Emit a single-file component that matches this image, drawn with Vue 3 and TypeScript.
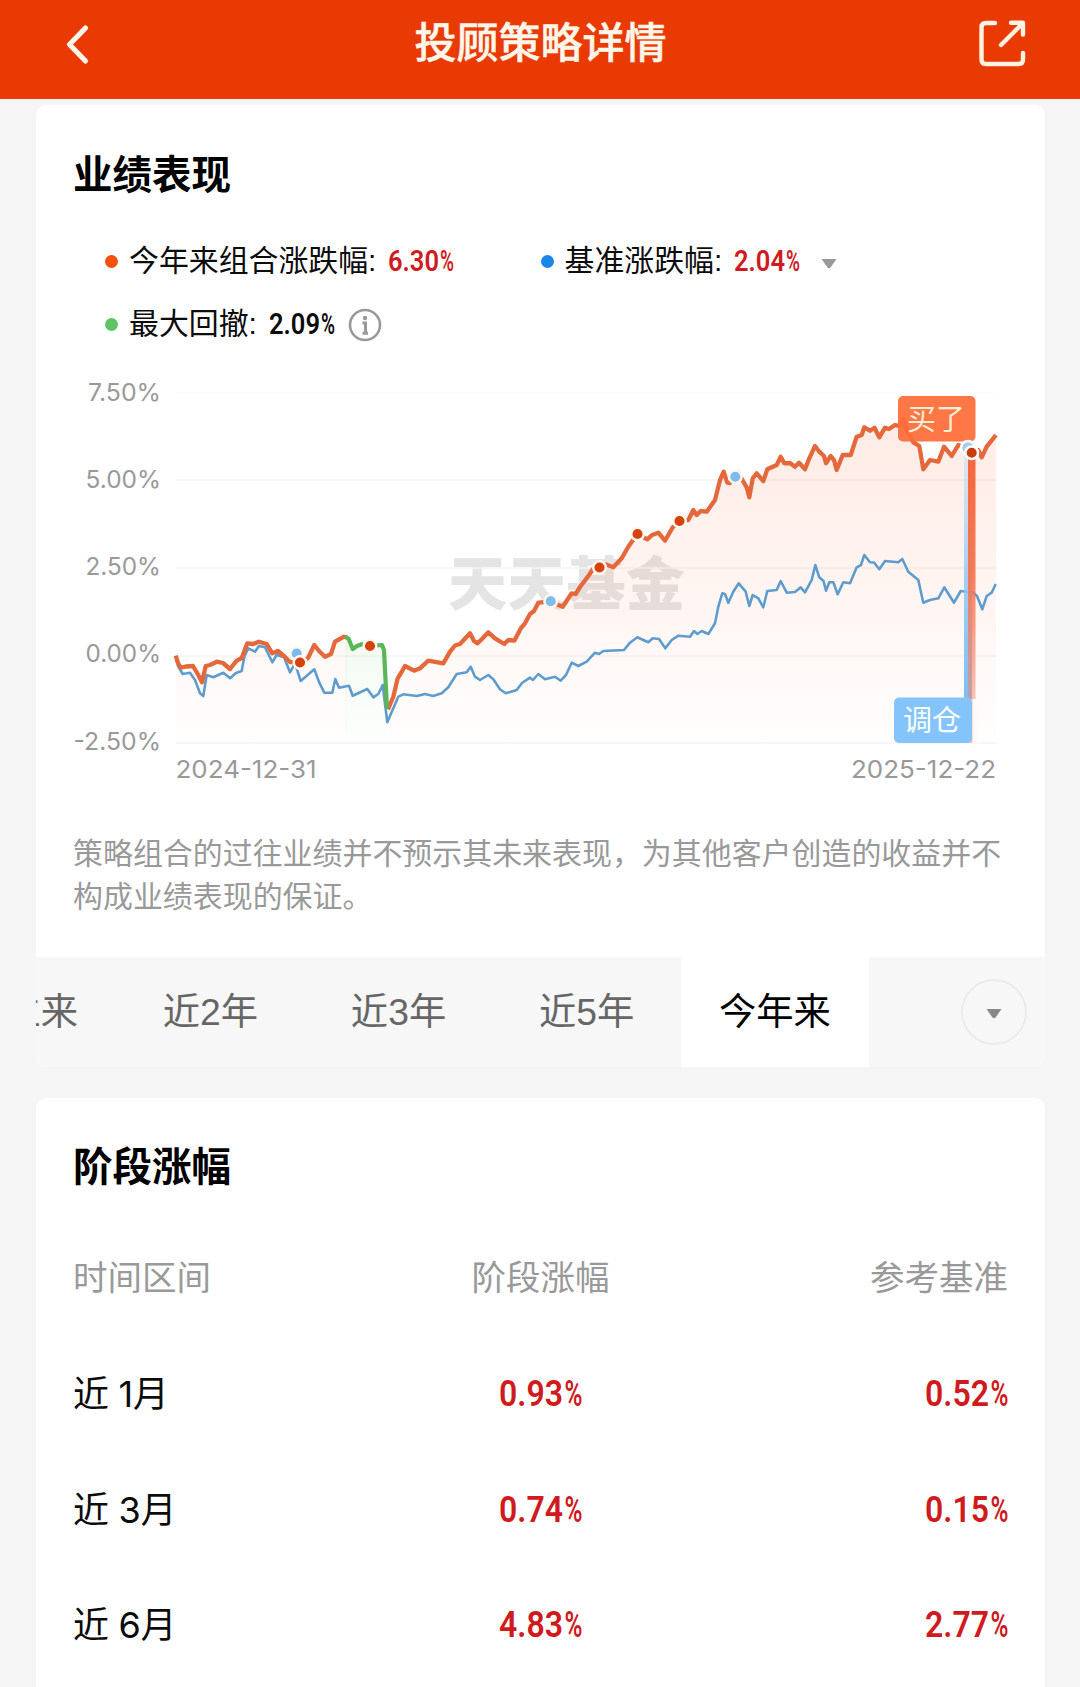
<script setup lang="ts">
type Point = [number, number]

interface StageRow {
  span: string
  gain: string
  base: string
}

const tabs: string[] = ['成立来', '近2年', '近3年', '近5年', '今年来']
const activeTab = '今年来'

const rows: StageRow[] = [
  { span: '近 1月', gain: '0.93', base: '0.52' },
  { span: '近 3月', gain: '0.74', base: '0.15' },
  { span: '近 6月', gain: '4.83', base: '2.77' },
]

const axis = [
  { label: '7.50%', x: 88, y: 400.5, line: 393, tone: '#fbfbfb' },
  { label: '5.00%', x: 85.5, y: 487.5, line: 480, tone: '#f3f2f2' },
  { label: '2.50%', x: 85.5, y: 575, line: 568, tone: '#f6f5f5' },
  { label: '0.00%', x: 85.5, y: 662, line: 656, tone: '#f6f5f5' },
  { label: '-2.50%', x: 73.5, y: 750, line: 743, tone: '#f5f4f4' },
]

const before: Point[] = [
  [175.7, 655.7], [178, 663], [180.7, 667.7], [186, 666.5], [193, 666], [198.3, 675], [202, 682.3], [205.7, 666], [210, 665], [216.7, 661.7],
  [223, 663], [230, 669], [236.7, 660.7], [241.7, 658], [247.3, 643.3], [253, 644], [259, 641.7], [266.7, 644],
  [272.3, 653.3], [278, 651], [284, 656], [290, 662], [300, 662.3], [308, 658], [314.3, 645], [319, 651], [325, 656.7], [331, 654],
  [335, 641.7], [344, 636.7], [347.3, 637.7],
]
const drawdown: Point[] = [
  [345, 636.7], [348.5, 638.5], [352.7, 649], [357, 646], [361.7, 644.3], [370, 646], [382, 645], [384, 650], [387, 708.3],
]
const after: Point[] = [
  [388, 709.5], [393.3, 696.7], [397.7, 678.3], [401, 673], [405, 666], [414, 670.7], [420, 668.3], [428.3, 660.7], [443.3, 663.3],
  [450, 651.7], [455, 645.5], [460, 644], [470, 633.3], [474, 641], [477.3, 643.3], [482, 639], [488.3, 632.3], [495, 638.3], [504.3, 644], [508.3, 640],
  [514.3, 640.7], [521, 628], [525, 623.3], [530, 614], [534, 611], [538.3, 602.7], [550.7, 601.7], [562.7, 606.7], [571.7, 593.3], [575.7, 594],
  [580, 587], [588.3, 576], [593, 569], [599.3, 567.3], [606, 564.5], [613.3, 567.3], [621.7, 558.3], [628.3, 546.7], [637.3, 534],
  [647.3, 539.3], [652, 535], [658.3, 532.7], [665, 540.7], [672.7, 527.3], [679.3, 521.3], [688.3, 520], [693.3, 510],
  [696.7, 515], [700.7, 511], [706.7, 511.7], [715, 500], [720, 480], [723.7, 471.7], [727.3, 482.7], [730, 483],
  [738, 472], [744, 482.7], [746.7, 487.3], [749.3, 497.3], [752.7, 478.3], [756.7, 473.3], [763.3, 481],
  [767.3, 469.3], [776.7, 465], [780.7, 456.7], [784.3, 463.3], [790, 463], [795, 466.7], [799, 462.7], [805, 469.3],
  [809.3, 458.3], [815, 446], [819.3, 451.7], [824, 456], [826, 463.3], [830.7, 456], [834, 460], [836.7, 470],
  [842.7, 455], [850.7, 455], [856.7, 436.7], [861.7, 435], [864.3, 427.3], [870, 430.7], [874.5, 427.7],
  [879.3, 437.3], [885, 427.7], [889, 429], [895, 425], [899, 426], [903.3, 419.3], [906.7, 430], [913.3, 442.3], [919.3, 446],
  [923.3, 469.3], [930, 460], [938.3, 461.7], [944, 446.7], [951.7, 456], [958.3, 445], [968, 448], [978.3, 450],
  [981.7, 457.3], [986.7, 446.7], [990.7, 441.7], [996, 435],
]
const benchmark: Point[] = [
  [175.7, 656.7], [178, 666], [182.7, 674], [190, 672.7], [195, 680], [200, 693.3], [203.3, 696], [206.7, 675], [213.3, 677.3], [223.3, 672.7],
  [230, 678.3], [236, 673], [241.7, 671], [244.3, 656.7], [248.3, 648.3], [255, 651.7], [259, 646], [265, 647.3], [272.3, 662.3],
  [276.7, 655], [284, 657.3], [290, 672.3], [295, 663.3], [300.7, 681], [314.3, 669.3], [319.3, 682.7], [324.3, 692.7],
  [332.3, 692.7], [335.3, 679], [339, 687.7], [349, 685.7], [352.7, 695.7], [367.3, 689], [373.3, 697.3], [378.3, 694],
  [382.7, 685], [387.3, 722.3], [393.3, 708.3], [398.3, 696.7], [403.3, 694.3], [416.7, 696], [425, 694], [433.3, 696],
  [441.7, 693.3], [448.3, 687.3], [456.7, 674], [466.7, 672.3], [470.7, 666.7], [475, 676.7], [480, 680], [488.3, 675],
  [493.3, 679.3], [500, 689.3], [505.7, 693.3], [516.7, 690], [522, 683], [530, 677.7], [533, 680], [538.3, 674], [545, 679.3], [555, 676.7],
  [560.7, 680.7], [566, 675], [571.7, 662.7], [578.3, 666], [586.7, 661.7], [595, 652.7], [599, 654], [603.3, 651], [624, 650],
  [630, 642.7], [637.3, 637.3], [648.3, 642.3], [652.7, 638.3], [659, 639], [665.3, 648.3], [671.7, 640], [678.3, 635.7],
  [690, 636.7], [694, 631], [697.3, 634], [701.7, 631], [708.3, 634], [715, 623.3], [718.3, 606.7], [722.3, 593.3],
  [725, 594], [728.3, 602.7], [733.3, 591.7], [738.7, 583.3], [745.7, 591.7], [749.3, 606], [752.7, 595], [758.3, 598.3],
  [763.3, 607.3], [767.3, 591], [776.7, 590], [780.7, 581], [786.7, 592.7], [795, 592], [800.7, 587.3], [805, 592.3],
  [811.7, 580], [815.3, 565], [819.3, 577.3], [823.5, 581], [826, 590.7], [829.3, 582.3], [833.3, 582.3], [837.7, 594.3],
  [843.3, 582.3], [850, 583.3], [856.7, 567.3], [861, 565], [864.3, 555], [870, 562.3], [874, 562.5], [879.3, 569.3], [885, 561],
  [898.3, 562.3], [902.3, 559], [908.3, 571.7], [918.3, 580], [923.3, 602.7], [930, 600], [938.3, 598.3], [944.3, 587.3],
  [954, 602.7], [960.7, 591], [973.3, 592.7], [977, 596], [982.3, 609.3], [986.7, 596], [991.7, 592.7], [995.7, 584],
]

const trades: Point[] = [[300, 662.5], [370, 646], [599.5, 567.5], [637.5, 534], [679.5, 521]]
const adjusts: Point[] = [[296.7, 653.5], [550.7, 601.3], [735.3, 476.7]]

const path = (pts: Point[]): string => 'M' + pts.map((p) => p.join(' ')).join('L')
const area = (pts: Point[]): string =>
  `${path(pts)}L${pts[pts.length - 1][0]} 743L${pts[0][0]} 743Z`
</script>

<template>
  <div class="page">
    <header class="bar">
      <svg class="back" width="30" height="46" viewBox="0 0 30 46">
        <path d="M23.500 7L7.500 23.500L23.500 40" fill="none" stroke="#fff6ea" stroke-width="5.200" stroke-linecap="round" stroke-linejoin="round" />
      </svg>
      <h1>投顾策略详情</h1>
      <svg class="share" width="50" height="50" viewBox="978 19 50 50">
        <g fill="none" stroke="#fff3e2" stroke-width="4.400" stroke-linecap="round" stroke-linejoin="round">
          <path d="M995 23H986Q981.500 23 981.500 27.500V59.500Q981.500 64 986 64H1018.500Q1023 64 1023 59.500V53" />
          <path d="M1001 45L1022.500 23.500M1011 22.800H1023V34.500" />
        </g>
      </svg>
    </header>

    <section class="card perf">
      <h2>业绩表现</h2>
      <div class="legend">
        <div class="item">
          <i class="dot orange"></i><span class="name">今年来组合涨跌幅:</span>
          <svg class="value red" width="66" height="30"><text x="0" y="24"><tspan textLength="51" lengthAdjust="spacingAndGlyphs">6.30</tspan><tspan x="52" textLength="14" lengthAdjust="spacingAndGlyphs">%</tspan></text></svg>
        </div>
        <div class="item">
          <i class="dot blue"></i><span class="name">基准涨跌幅:</span>
          <svg class="value red" width="66" height="30"><text x="0" y="24"><tspan textLength="51" lengthAdjust="spacingAndGlyphs">2.04</tspan><tspan x="52" textLength="14" lengthAdjust="spacingAndGlyphs">%</tspan></text></svg>
          <svg class="caret" width="16" height="10"><path d="M0.500 0H15.500L9.500 8.500Q8 10 6.500 8.500Z" fill="#999" /></svg>
        </div>
        <div class="item">
          <i class="dot green"></i><span class="name">最大回撤:</span>
          <svg class="value" width="66" height="30"><text x="0" y="24"><tspan textLength="51" lengthAdjust="spacingAndGlyphs">2.09</tspan><tspan x="52" textLength="14" lengthAdjust="spacingAndGlyphs">%</tspan></text></svg>
          <svg class="info" width="34" height="34" viewBox="0 0 34 34">
            <circle cx="17" cy="17" r="15" fill="none" stroke="#999" stroke-width="2.600" />
            <circle cx="17" cy="10" r="2.200" fill="#999" />
            <path d="M14.500 15H17.500V25M14.500 25.200H20" fill="none" stroke="#999" stroke-width="3" />
          </svg>
        </div>
      </div>

      <svg class="chart" width="1009" height="430" viewBox="36 370 1009 430">
        <defs>
          <linearGradient id="warm" x1="0" y1="420" x2="0" y2="743" gradientUnits="userSpaceOnUse">
            <stop offset="0" stop-color="#ff6432" stop-opacity="0.130" />
            <stop offset="0.500" stop-color="#ff6e3c" stop-opacity="0.075" />
            <stop offset="1" stop-color="#ff7846" stop-opacity="0.010" />
          </linearGradient>
          <linearGradient id="mint" x1="0" y1="636" x2="0" y2="743" gradientUnits="userSpaceOnUse">
            <stop offset="0" stop-color="#64c864" stop-opacity="0.090" />
            <stop offset="1" stop-color="#64c864" stop-opacity="0.010" />
          </linearGradient>
          <linearGradient id="buy" x1="0" y1="452" x2="0" y2="700" gradientUnits="userSpaceOnUse">
            <stop offset="0" stop-color="#f7653a" />
            <stop offset="0.500" stop-color="#f7704a" stop-opacity="0.900" />
            <stop offset="1" stop-color="#f58468" stop-opacity="0.480" />
          </linearGradient>
          <linearGradient id="move" x1="0" y1="452" x2="0" y2="700" gradientUnits="userSpaceOnUse">
            <stop offset="0" stop-color="#b9ddf6" stop-opacity="0.450" />
            <stop offset="0.500" stop-color="#93c8f2" stop-opacity="0.850" />
            <stop offset="1" stop-color="#7fbdf3" />
          </linearGradient>
        </defs>
        <text class="mark" x="448" y="604.500" textLength="237" lengthAdjust="spacingAndGlyphs">天天基金</text>
        <g v-for="a in axis" :key="a.label">
          <path :d="`M176 ${a.line}H996`" :stroke="a.tone" stroke-width="1.500" />
          <text class="tick" :x="a.x" :y="a.y" :textLength="161 - a.x" lengthAdjust="spacingAndGlyphs">{{ a.label }}</text>
        </g>
        <path :d="area(before)" fill="url(#warm)" />
        <path :d="area(drawdown)" fill="url(#mint)" />
        <path :d="area(after)" fill="url(#warm)" />
        <g fill="none" stroke-linejoin="round">
          <path :d="path(benchmark)" stroke="#5f9ccd" stroke-width="2.600" />
          <path :d="path(before)" stroke="#e4683c" stroke-width="4.300" />
          <path :d="path(after)" stroke="#e4683c" stroke-width="4.300" />
          <path :d="path(drawdown)" stroke="#5bb559" stroke-width="4.200" />
        </g>
        <g stroke="#fff8f0" stroke-width="2.500">
          <circle v-for="p in adjusts" :key="p[0]" :cx="p[0]" :cy="p[1]" r="6.300" fill="#7dbcec" />
          <circle v-for="p in trades" :key="p[0]" :cx="p[0]" :cy="p[1]" r="6.300" fill="#d6410c" />
        </g>
        <rect x="964" y="452" width="8" height="247" fill="url(#move)" />
        <rect x="968" y="452" width="7.500" height="291" fill="url(#buy)" />
        <rect x="898" y="396" width="77.500" height="45.500" rx="5" fill="#ff6c39" fill-opacity="0.930" />
        <text class="tag" x="907" y="429.500" fill="#ffedd2">买了</text>
        <rect x="894" y="697.500" width="78" height="45.500" rx="5" fill="#84c4fb" />
        <path d="M972.500 699V745H977V699Z" fill="#fffaf8" />
        <text class="tag" x="903" y="731" fill="#f7ffff">调仓</text>
        <circle cx="968" cy="448" r="7" fill="#a6cdea" stroke="#fff" stroke-width="2.500" />
        <circle cx="971.700" cy="452.700" r="6.300" fill="#c93a0c" stroke="#fff" stroke-width="2.500" />
        <text class="tick" x="175.500" y="777.500" textLength="141" lengthAdjust="spacingAndGlyphs">2024-12-31</text>
        <text class="tick" x="851" y="777.500" textLength="145" lengthAdjust="spacingAndGlyphs">2025-12-22</text>
      </svg>

      <p class="note">策略组合的过往业绩并不预示其未来表现，为其他客户创造的收益并不构成业绩表现的保证。</p>

      <nav class="tabs">
        <div class="strip">
          <span v-for="t in tabs" :key="t" class="tab" :class="{ active: t === activeTab }">{{ t }}</span>
        </div>
        <span class="more">
          <svg width="16" height="10"><path d="M0.500 0H15.500L9.500 8.500Q8 10 6.500 8.500Z" fill="#888" /></svg>
        </span>
      </nav>
    </section>

    <section class="card stage">
      <h2>阶段涨幅</h2>
      <div class="row head"><span>时间区间</span><span>阶段涨幅</span><span>参考基准</span></div>
      <div v-for="r in rows" :key="r.span" class="row">
        <span class="span">{{ r.span }}</span>
        <svg v-for="(v, i) in [r.gain, r.base]" :key="i" class="value big red" width="83" height="36">
          <text x="0" y="30.500"><tspan textLength="64" lengthAdjust="spacingAndGlyphs">{{ v }}</tspan><tspan x="65.500" textLength="18" lengthAdjust="spacingAndGlyphs">%</tspan></text>
        </svg>
      </div>
    </section>
  </div>
</template>

<style>
body {
  background: #f5f5f5;
}
</style>

<style scoped>
.page {
  width: 1080px;
  height: 1687px;
  overflow: hidden;
  background: #f5f5f5;
  font-family: "Liberation Sans", "Noto Sans CJK SC", sans-serif;
  color: #0c0c0c;
}
.bar {
  box-sizing: border-box;
  height: 99px;
  padding: 0 52px 12px 62px;
  display: grid;
  grid-template-columns: 50px 1fr 50px;
  align-items: center;
  background: #e83a02;
}
.bar h1 {
  margin: 0 0 7px;
  padding-right: 9px;
  text-align: center;
  font-size: 42px;
  line-height: 60px;
  font-weight: 500;
  color: #fff6ea;
  font-family: "Noto Sans CJK SC", sans-serif;
  -webkit-text-stroke: 0.500px #fff6ea;
}
h2 {
  margin: 0;
  padding-left: 37px;
  font: 700 39.500px/60px "Noto Sans CJK SC", sans-serif;
  color: #000;
}
.card {
  width: 1009px;
  margin-left: 36px;
  background: #fff;
  border-radius: 10px;
  overflow: hidden;
}
.perf {
  margin-top: 6px;
  height: 962px;
  display: flex;
  flex-direction: column;
}
.perf h2 {
  margin: 37px 0 2px;
}
.legend {
  height: 166px;
  padding: 26px 0 0 69px;
  box-sizing: border-box;
  display: grid;
  grid-template-columns: 435.500px 1fr;
  grid-template-rows: 63px 63px;
}
.item {
  display: flex;
  align-items: center;
}
.name {
  margin-bottom: 1px;
  font-size: 29.900px;
  line-height: 40px;
  white-space: nowrap;
}
.dot {
  width: 13px;
  height: 13px;
  border-radius: 50%;
  margin-right: 11px;
}
.orange {
  background: #f1500f;
}
.blue {
  background: #1a86ea;
}
.green {
  background: #5fc463;
}
.value {
  font: 600 30px Roboto, sans-serif;
  fill: #0c0c0c;
  margin-left: 12px;
  overflow: visible;
}
.value.red {
  fill: #cf1a1e;
}
.caret {
  margin: 5px 0 0 21px;
}
.info {
  margin-left: 13px;
}
.chart {
  display: block;
  flex: none;
}
.tick {
  font: 400 24px Inter, sans-serif;
  fill: #999;
}
.tag {
  font: 400 29px "Noto Sans CJK SC", sans-serif;
}
.mark {
  font: 900 58px "Noto Sans CJK SC", sans-serif;
  fill: #e4e4e4;
}
.note {
  margin: 32px 37px 0;
  height: 125px;
  font-size: 29.940px;
  line-height: 43px;
  color: #999;
  word-break: break-all;
}
.tabs {
  height: 110px;
  flex: none;
  display: flex;
  background: #f7f7f7;
}
.strip {
  width: 833px;
  display: flex;
  justify-content: flex-end;
  overflow: hidden;
}
.tab {
  flex: none;
  width: 188.200px;
  line-height: 110px;
  text-align: center;
  font-size: 37.300px;
  color: #666;
}
.tab.active {
  background: #fff;
  color: #000;
}
.more {
  box-sizing: border-box;
  width: 66px;
  height: 66px;
  margin: 22px 0 0 92px;
  border: 2px solid #ebebeb;
  border-radius: 50%;
  display: flex;
  align-items: center;
  justify-content: center;
  padding-top: 3px;
}
.stage {
  margin-top: 31px;
  height: 640px;
}
.stage h2 {
  padding-top: 36px;
  margin-bottom: 1px;
}
.row {
  height: 115.500px;
  padding: 0 37px;
  display: grid;
  grid-template-columns: 1fr 1fr 1fr;
  align-items: center;
  font-size: 36px;
}
.row > :nth-child(2) {
  justify-self: center;
}
.row > :nth-child(3) {
  justify-self: end;
}
.row.head {
  padding-top: 22px;
  padding-bottom: 3px;
  font-size: 34.500px;
  color: #999;
}
.span {
  margin-bottom: 4px;
  font-family: Inter, "Noto Sans CJK SC", sans-serif;
  letter-spacing: -0.300px;
}
.big {
  margin: 0;
  font-size: 37px;
}
</style>
